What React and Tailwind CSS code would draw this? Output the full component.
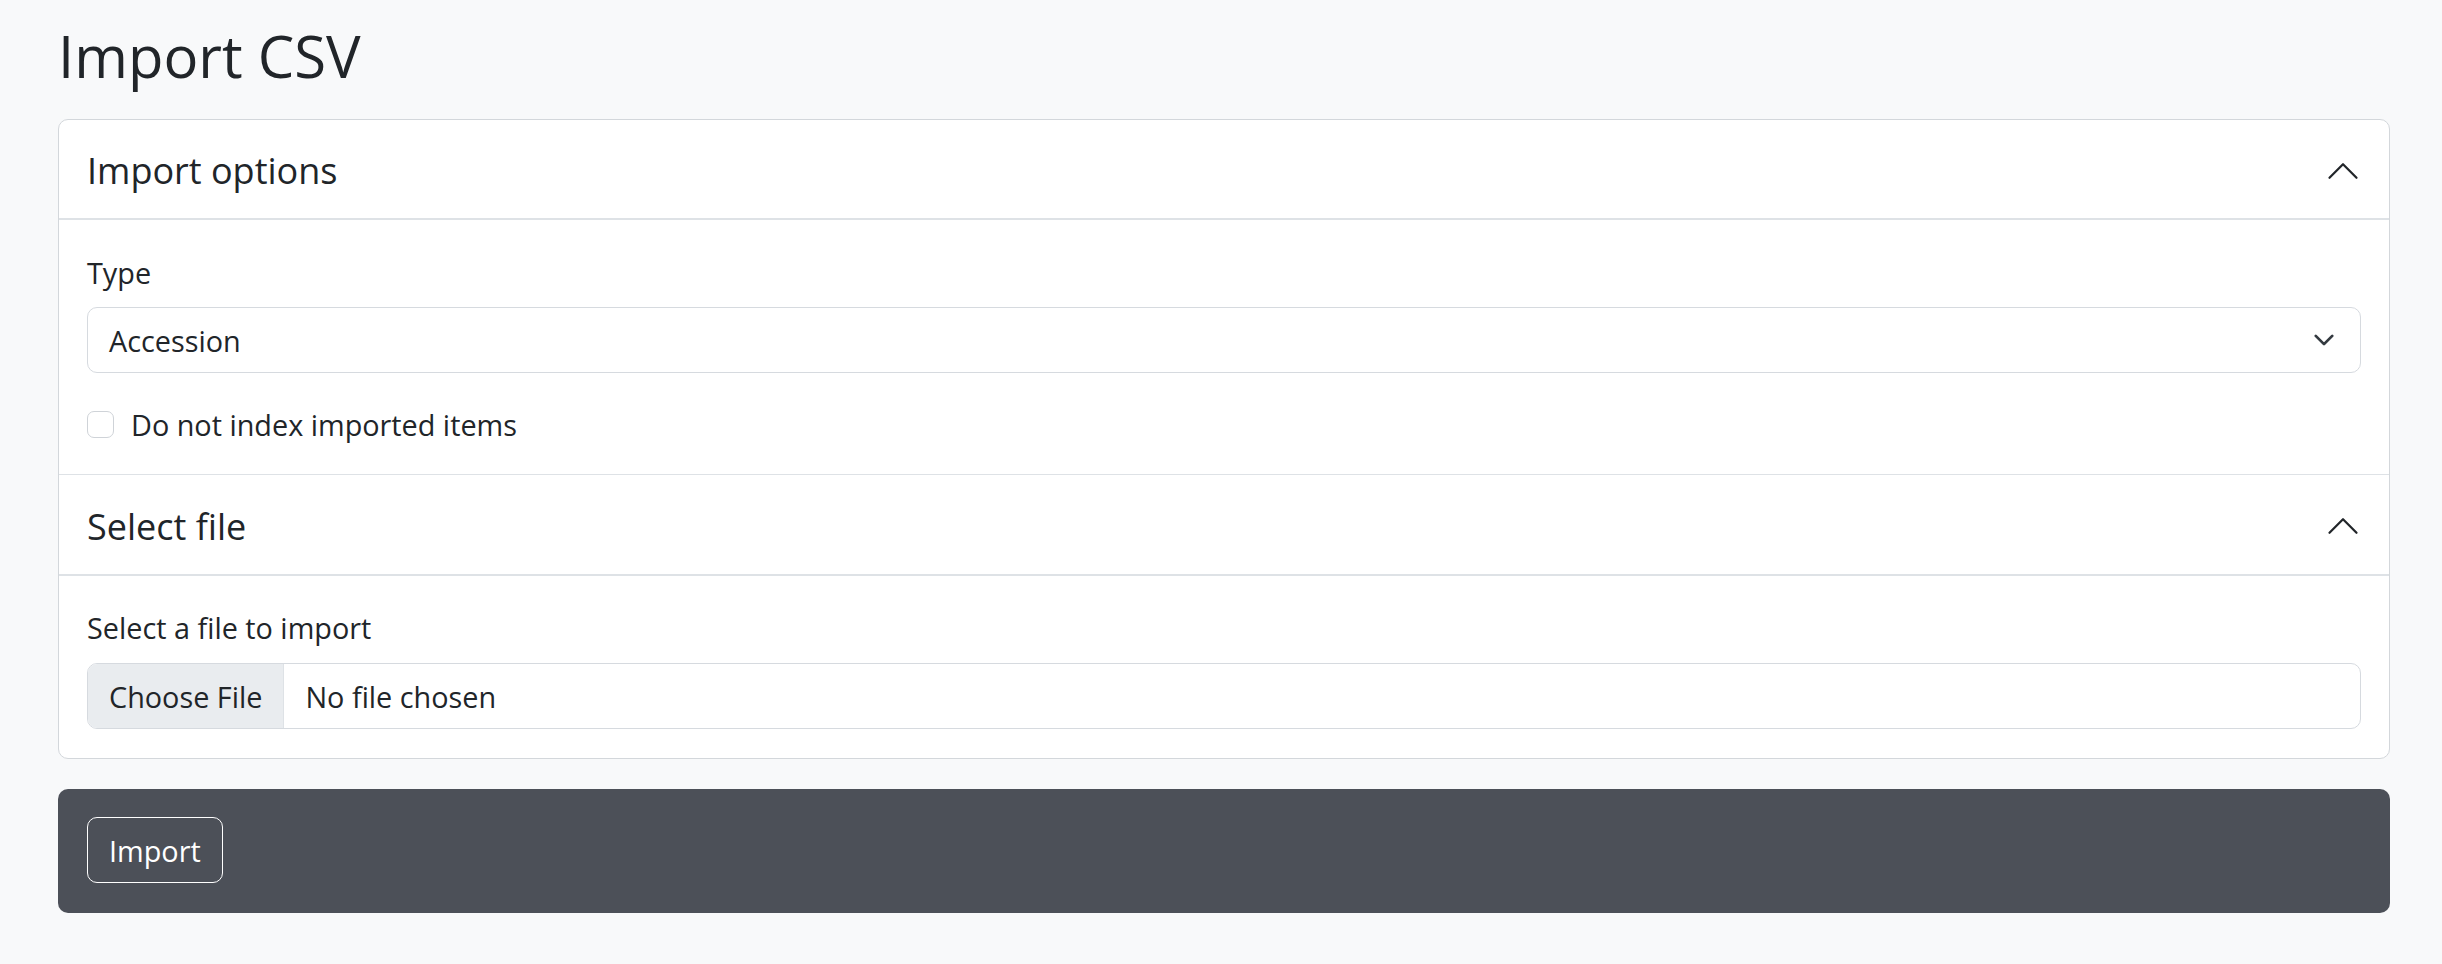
import { useState } from "react";

const font = { fontFamily: '"Open Sans", "Noto Sans", "Liberation Sans", sans-serif' };

function ChevronUp() {
  // bootstrap accordion chevron, flipped
  return (
    <svg viewBox="0 0 16 16" className="h-[36px] w-[36px] rotate-180" fill="#212529">
      <path
        fillRule="evenodd"
        d="M1.646 4.646a.5.5 0 0 1 .708 0L8 10.293l5.646-5.647a.5.5 0 0 1 .708.708l-6 6a.5.5 0 0 1-.708 0l-6-6a.5.5 0 0 1 0-.708z"
      />
    </svg>
  );
}

function SectionHeader({ title, className = "" }) {
  return (
    <div className={`flex items-center justify-between border-b-2 border-[#dee2e6] px-[28px] pt-[3px] ${className}`}>
      <h2 className="text-[36px] leading-[43px] font-normal">{title}</h2>
      <ChevronUp />
    </div>
  );
}

export default function App() {
  const [noIndex, setNoIndex] = useState(false);

  return (
    <div className="min-h-screen bg-[#f8f9fa] pb-[51px] pl-[58px] pr-[52px] pt-[21px] text-[#212529]" style={font}>
      <h1 className="mb-[28px] text-[58px] leading-[70px] font-normal">Import CSV</h1>

      <div className="rounded-[10px] border border-[#d3d7db] bg-white">
        <SectionHeader title="Import options" className="h-[100px]" />
        <div className="border-b border-[#dee2e6] px-[28px] pb-[28px] pt-[31px] text-[28.8px] leading-[43px]">
          <label className="mb-[13px] block">Type</label>
          <div className="flex h-[66px] items-center justify-between rounded-[10px] border border-[#d6dadf] pl-[21px] pr-[25px]">
            <span>Accession</span>
            <svg viewBox="0 0 16 16" className="h-[22px] w-[22px]" fill="none">
              <path d="m2 5 6 6 6-6" stroke="#343a40" strokeWidth="2" strokeLinecap="round" strokeLinejoin="round" />
            </svg>
          </div>
          <label className="mt-[30px] flex cursor-pointer items-center gap-[17px]">
            <span
              onClick={() => setNoIndex(!noIndex)}
              className={`h-[27px] w-[27px] shrink-0 rounded-[7px] border ${noIndex ? "border-[#0d6efd] bg-[#0d6efd]" : "border-[#cfd3d8] bg-white"}`}
            />
            <span>Do not index imported items</span>
          </label>
        </div>

        <SectionHeader title="Select file" className="h-[101px]" />
        <div className="px-[28px] pb-[29px] pt-[30px] text-[28.8px] leading-[43px]">
          <label className="mb-[14px] block">Select a file to import</label>
          <div className="flex h-[66px] items-stretch overflow-hidden rounded-[10px] border border-[#d6dadf]">
            <div className="flex items-center border-r border-[#dee2e6] bg-[#e9ecef] px-[21px]">Choose File</div>
            <div className="flex items-center pl-[21px]">No file chosen</div>
          </div>
        </div>
      </div>

      <div className="mt-[30px] rounded-[10px] bg-[#4c5058] px-[29px] pb-[30px] pt-[28px]">
        <button className="h-[66px] rounded-[10px] border border-white px-[21px] text-[28.8px] leading-[43px] text-white">
          Import
        </button>
      </div>
    </div>
  );
}
